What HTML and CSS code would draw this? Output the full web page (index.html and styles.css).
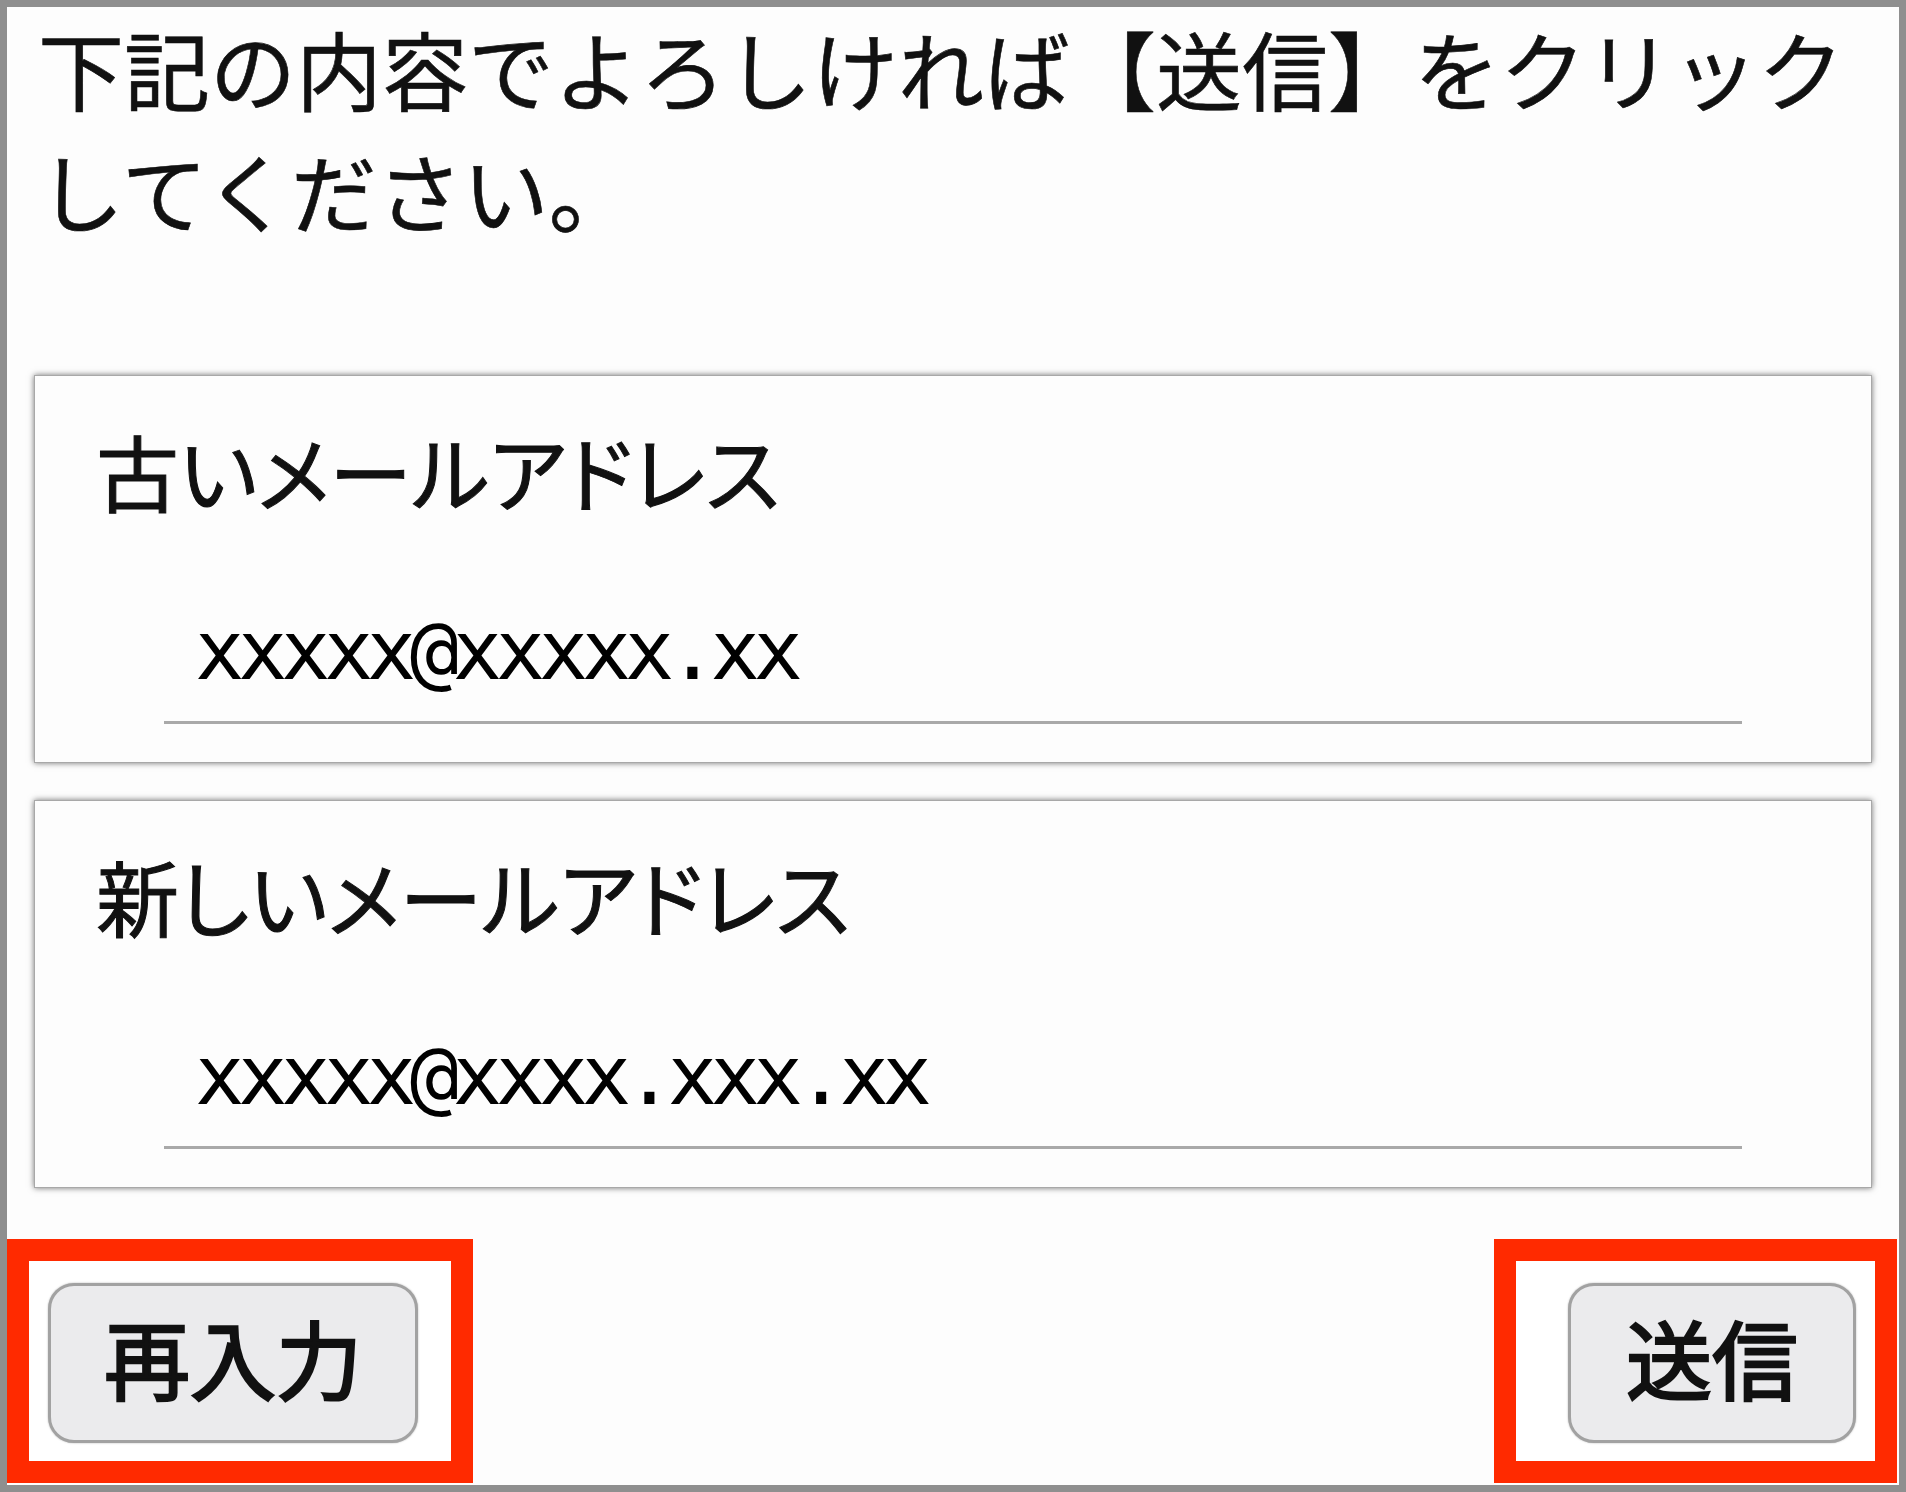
FILE: index.html
```html
<!DOCTYPE html>
<html lang="ja">
<head>
    <meta charset="UTF-8">
    <meta name="viewport" content="width=device-width, initial-scale=1.0">
    <title>メールアドレス変更 確認</title>
    <link rel="stylesheet" href="styles.css">
</head>
<body>

    <div class="frame">

        <p class="lead">下記の内容でよろしければ【送信】をクリックしてください。</p>

        <div class="card">
            <div class="card-label">古いメールアドレス</div>
            <div class="field">xxxxx@xxxxx.xx</div>
        </div>

        <div class="card">
            <div class="card-label">新しいメールアドレス</div>
            <div class="field">xxxxx@xxxx.xxx.xx</div>
        </div>

        <div class="actions">
            <div class="mark mark-left">
                <button class="btn btn-wide" type="button">再入力</button>
            </div>
            <div class="mark mark-right">
                <button class="btn btn-narrow" type="button">送信</button>
            </div>
        </div>

    </div>

</body>
</html>
```

FILE: styles.css
```css
body {
    margin: 0;
    background-color: #fff;
    font-family: "Noto Sans CJK JP", sans-serif;
    color: #111;
}

.frame {
    box-sizing: border-box;
    height: 1492px;
    border: 7px solid #8f8f8f;
    background-color: #fdfdfd;
}

.lead {
    margin: 0 0 124px;
    padding: 0 20px 0 31px;
    font-size: 86px;
    line-height: 122px;
    -webkit-text-stroke: 0.6px #111;
}

.card {
    margin: 0 27px 37px;
    padding: 46px 0 38px;
    background-color: #fdfdfd;
    border: 1px solid #a8a8a8;
    box-shadow: 0 0 6px rgba(0, 0, 0, 0.55);
}

.card + .card {
    margin-bottom: 51px;
}

.card-label {
    padding-left: 61px;
    font-size: 83px;
    line-height: 96px;
    font-feature-settings: "palt";
    -webkit-text-stroke: 1px #111;
}

.field {
    margin: 88px 129px 0;
    padding: 0 0 25px 31px;
    border-bottom: 3px solid #a9a9a9;
    font-family: "DejaVu Sans Mono", monospace;
    font-size: 82px;
    line-height: 90px;
    letter-spacing: -6.4px;
    color: #000;
}

.actions {
    display: flex;
    justify-content: space-between;
    padding-right: 2px;
}

.mark {
    border: 22px solid #ff2a00;
    background-color: #fff;
}

.mark-left {
    padding: 22px 33px 18px 19px;
}

.mark-right {
    padding: 22px 19px 18px 52px;
}

.btn {
    display: block;
    box-sizing: border-box;
    height: 160px;
    padding: 0 0 12px;
    border: 3px solid #a2a2a2;
    border-radius: 26px;
    background-color: #ebebed;
    box-shadow: 0 0 2px rgba(0, 0, 0, 0.3);
    font-family: "Noto Sans CJK JP", sans-serif;
    font-size: 86px;
    font-weight: 400;
    -webkit-text-stroke: 2.5px #111;
    color: #111;
    line-height: 1;
}

.btn-wide {
    width: 370px;
}

.btn-narrow {
    width: 288px;
}
```
